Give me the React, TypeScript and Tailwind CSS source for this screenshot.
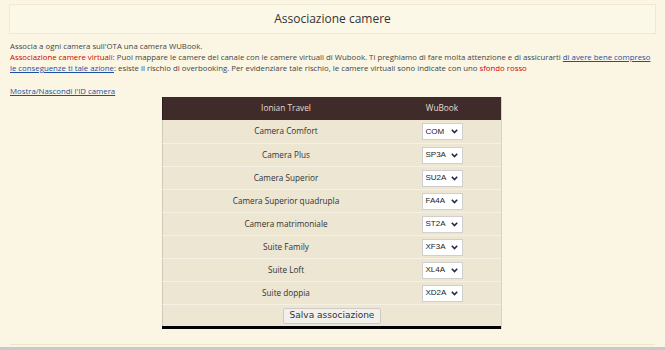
import React from "react";

const rows: [string, string][] = [
  ["Camera Comfort", "COM"],
  ["Camera Plus", "SP3A"],
  ["Camera Superior", "SU2A"],
  ["Camera Superior quadrupla", "FA4A"],
  ["Camera matrimoniale", "ST2A"],
  ["Suite Family", "XF3A"],
  ["Suite Loft", "XL4A"],
  ["Suite doppia", "XD2A"],
];

function Chevron() {
  return (
    <svg width="7" height="5" viewBox="0 0 7 5" className="ml-auto">
      <path d="M0.8 0.8 L3.5 3.6 L6.2 0.8" fill="none" stroke="#1f2a44" strokeWidth="1.6" />
    </svg>
  );
}

export default function App() {
  return (
    <div
      className="w-[665px] h-[350px] bg-[#faf6e3] overflow-hidden flex flex-col text-[#444]"
      style={{ fontFamily: '"Open Sans", "Noto Sans", sans-serif' }}
    >
      <div className="mx-[9px] mt-[4px] h-[30px] border border-[#efe9cf] bg-[#fbf8e8] flex items-center justify-center text-[12px] text-[#333]">
        Associazione camere
      </div>
      <div className="pl-[10px] mt-[7px] text-[7.8px] leading-[11px] whitespace-nowrap">
        <div>Associa a ogni camera sull'OTA una camera WUBook.</div>
        <div>
          <span className="text-[#d00000]">Associazione camere virtuali:</span> Puoi mappare le camere del canale con le
          camere virtuali di Wubook. Ti preghiamo di fare molta attenzione e di assicurarti{" "}
          <a className="text-[#1d4fa3] underline">di avere bene compreso</a>
        </div>
        <div>
          <a className="text-[#1d4fa3] underline">le conseguenze ti tale azione</a>: esiste il rischio di overbooking.
          Per evidenziare tale rischio, le camere virtuali sono indicate con uno{" "}
          <span className="text-[#d00000]">sfondo rosso</span>
        </div>
        <div className="mt-[12px]">
          <a className="text-[#1d4fa3] underline">Mostra/Nascondi l'ID camera</a>
        </div>
      </div>
      <div className="ml-[162px] w-[340px] mt-[0px] bg-[#ece6d3] border-r border-[#d9d4c6]">
        <div className="h-[23px] bg-[#3f2b2a] grid grid-cols-[246px_66px_1fr] items-center text-[8.3px] text-[#e6dcd2] border-l border-[#2a1c1b]">
          <div className="text-center">Ionian Travel</div>
          <div className="text-center">WuBook</div>
          <div />
        </div>
        {rows.map(([name, code], i) => (
          <div
            key={name}
            className={`h-[23px] grid grid-cols-[246px_66px_1fr] items-center text-[8.2px] text-[#333] border-l border-[#cfc9b8] ${i > 0 ? "border-t border-t-[#f5f1e5]" : ""}`}
          >
            <div className="text-center">{name}</div>
            <div className="flex justify-center">
              <div
                className="w-[41px] h-[17px] bg-white border border-[#cfcfcf] flex items-center pl-[3px] pr-[4px] text-[8px] text-[#222]"
                style={{ fontFamily: '"Liberation Sans", Arial, sans-serif' }}
              >
                <span>{code}</span>
                <Chevron />
              </div>
            </div>
            <div />
          </div>
        ))}
        <div className="h-[22px] flex items-center justify-center border-l border-t border-[#cfc9b8] border-t-[#f5f1e5]">
          <div
            className="w-[98px] h-[16px] bg-[#f1f0ec] border border-[#cfcbc0] rounded-[2px] flex items-center justify-center text-[9px] text-[#333]"
            style={{ fontFamily: '"DejaVu Sans", Verdana, sans-serif' }}
          >
            Salva associazione
          </div>
        </div>
        <div className="h-[3px] bg-black" />
      </div>
      <div className="flex-1" />
      <div className="mx-[10px] h-[1px] bg-[#ece6cc] mb-[2px]" />
      <div className="h-[3px] bg-[#c9c9c9]" />
    </div>
  );
}
